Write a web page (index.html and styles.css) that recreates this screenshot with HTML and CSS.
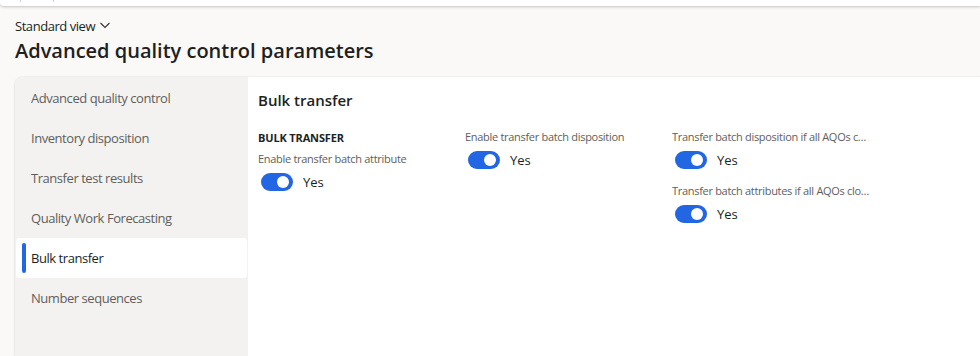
FILE: index.html
```html
<!DOCTYPE html>
<html lang="en">
<head>
    <meta charset="UTF-8">
    <meta name="viewport" content="width=device-width, initial-scale=1.0">
    <title>Advanced quality control parameters</title>
    <link rel="stylesheet" href="styles.css">
</head>
<body>
    <div class="topbar">
        <span class="tick tick-a"></span>
        <span class="tick tick-b"></span>
    </div>

    <div class="page">
        <div class="view-picker">
            Standard view
            <svg class="chevron" width="12" height="12" viewBox="0 0 12 12"><path d="M1.5 4 L6 8.5 L10.5 4" fill="none" stroke="#323130" stroke-width="1.1"/></svg>
        </div>
        <h1>Advanced quality control parameters</h1>

        <div class="card">
            <nav class="tabs">
                <a class="tab">Advanced quality control</a>
                <a class="tab">Inventory disposition</a>
                <a class="tab">Transfer test results</a>
                <a class="tab">Quality Work Forecasting</a>
                <a class="tab tab-active">Bulk transfer</a>
                <a class="tab">Number sequences</a>
            </nav>

            <section class="panel">
                <h2>Bulk transfer</h2>
                <div class="columns">
                    <div class="column">
                        <h3>BULK TRANSFER</h3>
                        <div class="field">
                            <label>Enable transfer batch attribute</label>
                            <div class="toggle-row"><span class="toggle"></span><span>Yes</span></div>
                        </div>
                    </div>
                    <div class="column">
                        <div class="field">
                            <label>Enable transfer batch disposition</label>
                            <div class="toggle-row"><span class="toggle"></span><span>Yes</span></div>
                        </div>
                    </div>
                    <div class="column">
                        <div class="field">
                            <label>Transfer batch disposition if all AQOs completed</label>
                            <div class="toggle-row"><span class="toggle"></span><span>Yes</span></div>
                        </div>
                        <div class="field">
                            <label>Transfer batch attributes if all AQOs closed</label>
                            <div class="toggle-row"><span class="toggle"></span><span>Yes</span></div>
                        </div>
                    </div>
                </div>
            </section>
        </div>
    </div>
</body>
</html>
```

FILE: styles.css
```css
:root {
    --text: #201f1e;
    --muted: #605e5c;
    --accent: #2266e3;
    --page: #faf9f8;
    --nav: #f3f2f1;
}
html, body {
    margin: 0;
    padding: 0;
    height: 100%;
    overflow: hidden;
}
body {
    font-family: 'Segoe UI', 'Open Sans', sans-serif;
    background-color: var(--page);
    color: var(--text);
}
.topbar {
    position: relative;
    height: 6px;
    background: white;
    border-bottom-left-radius: 4px;
    box-shadow: 0 1px 3px rgba(0,0,0,0.22);
}
.tick {
    position: absolute;
    top: 0;
    width: 1px;
    height: 2px;
    background: #d2d0ce;
}
.tick-a { left: 20px; }
.tick-b { left: 53px; }
.page {
    padding-left: 15px;
}
.view-picker {
    display: flex;
    align-items: center;
    gap: 4px;
    margin-top: 10px;
    font-size: 13px;
    line-height: 20px;
    letter-spacing: -0.45px;
}
.chevron {
    margin-top: -2px;
}
h1 {
    margin: 1px 0 0;
    font-size: 20px;
    font-weight: 600;
    line-height: 28px;
}
.card {
    display: flex;
    margin-top: 12px;
    height: 280px;
    background: white;
    border-top-left-radius: 8px;
    box-shadow: 0 0 2px rgba(0,0,0,0.12), 0 1px 3px rgba(0,0,0,0.08);
    overflow: hidden;
}
.tabs {
    width: 233px;
    flex: none;
    background: var(--nav);
    display: flex;
    flex-direction: column;
    padding: 1px 1px 0;
    box-sizing: border-box;
}
.tab {
    position: relative;
    height: 40px;
    line-height: 40px;
    padding-left: 15px;
    font-size: 13px;
    letter-spacing: -0.45px;
    color: var(--muted);
    border-radius: 4px;
}
.tab-active {
    background: white;
    color: var(--text);
}
.tab-active::before {
    content: "";
    position: absolute;
    left: 6px;
    top: 5px;
    bottom: 5px;
    width: 4px;
    border-radius: 2px;
    background: var(--accent);
}
.panel {
    flex: 1;
    padding: 11px 10px 0;
}
h2 {
    margin: 0;
    font-size: 15px;
    font-weight: 600;
    line-height: 24px;
}
.columns {
    display: flex;
    margin-top: 15px;
}
.column {
    width: 207px;
    flex: none;
}
h3 {
    margin: 0;
    font-size: 11px;
    font-weight: 700;
    line-height: 22px;
    letter-spacing: -0.15px;
}
.field {
    margin-bottom: 9px;
}
.field label {
    display: block;
    width: 198px;
    font-size: 11px;
    line-height: 20px;
    letter-spacing: -0.3px;
    color: var(--muted);
    white-space: nowrap;
    overflow: hidden;
    text-overflow: ellipsis;
}
.toggle-row {
    display: flex;
    align-items: center;
    gap: 10px;
    height: 24px;
    margin-top: 1px;
    padding-left: 3px;
    font-size: 13px;
}
.toggle {
    position: relative;
    width: 32px;
    height: 18px;
    border-radius: 9px;
    background: var(--accent);
}
.toggle::after {
    content: "";
    position: absolute;
    right: 4px;
    top: 3px;
    width: 12px;
    height: 12px;
    border-radius: 50%;
    background: white;
}
```
